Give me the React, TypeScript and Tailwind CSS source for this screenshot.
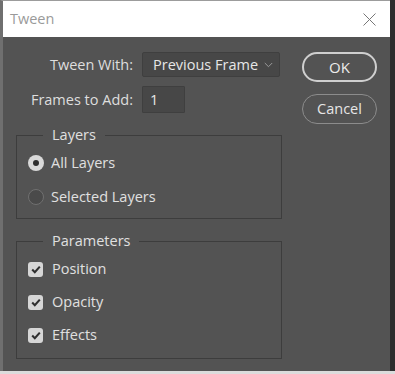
import { ReactNode } from 'react';

const font = { fontFamily: '"Open Sans", "Noto Sans", sans-serif' };

function Radio({ checked, label }: { checked?: boolean; label: string }) {
    return (
        <div className="flex h-[16px] items-center gap-[7px]">
            {checked ? (
                <span className="flex h-[16px] w-[16px] items-center justify-center rounded-full bg-[#d9d9d9]">
                    <span className="h-[6px] w-[6px] rounded-full bg-[#2e2e2e]" />
                </span>
            ) : (
                <span className="h-[16px] w-[16px] rounded-full border border-[#707070] bg-[#4a4a4a]" />
            )}
            <span className="text-[14.5px] text-[#e0e0e0]">{label}</span>
        </div>
    );
}

function Check({ label }: { label: string }) {
    return (
        <div className="flex h-[16px] items-center gap-[9px]">
            <span className="flex h-[15px] w-[15px] items-center justify-center rounded-[3px] bg-[#d6d6d6]">
                <svg width="10" height="9" viewBox="0 0 10 9">
                    <path d="M1.2 4.6 L3.8 7.2 L8.8 1.6" fill="none" stroke="#2f2f2f" strokeWidth="2.1" />
                </svg>
            </span>
            <span className="text-[14.5px] text-[#e0e0e0]">{label}</span>
        </div>
    );
}

function Group({ title, children, className }: { title: string; children: ReactNode; className?: string }) {
    return (
        <fieldset className={`ml-[13px] w-[266px] border border-[#3d3d3d] pl-[11px] ${className ?? ''}`}>
            <legend className="ml-[15px] px-[9px] text-[14.5px] leading-[20px] text-[#e0e0e0]">{title}</legend>
            {children}
        </fieldset>
    );
}

export default function App() {
    return (
        <div className="flex h-[374px] w-[395px] flex-col bg-[#dcdcdc]" style={font}>
            <div className="flex h-[371px]">
                <div className="flex w-[390px] flex-col border-l-[3px] border-t border-l-[#6f6f6f] border-t-[#9c9c9c]">
                    <div className="flex h-[36px] items-center justify-between bg-white pl-[7px] pr-[14px]">
                        <span className="text-[14.5px] text-[#9a9a9a]">Tween</span>
                        <svg width="13" height="13" viewBox="0 0 13 13">
                            <path d="M0.5 0.5 L12.5 12.5 M12.5 0.5 L0.5 12.5" stroke="#777" strokeWidth="1" />
                        </svg>
                    </div>
                    <div className="flex flex-1 bg-[#535353] pt-[15px]">
                        <div className="flex flex-col">
                            <div className="flex h-[25px] items-center">
                                <span className="w-[130px] text-right text-[14.5px] text-[#dedede]">Tween With:</span>
                                <div className="ml-[9px] flex h-[25px] w-[138px] items-center justify-between rounded-[2px] border border-[#3f3f3f] bg-[#474747] pl-[10px] pr-[6px]">
                                    <span className="text-[14.5px] text-[#e6e6e6]">Previous Frame</span>
                                    <svg width="9" height="6" viewBox="0 0 9 6">
                                        <path d="M0.8 1 L4.5 4.7 L8.2 1" fill="none" stroke="#9a9a9a" strokeWidth="1" />
                                    </svg>
                                </div>
                            </div>
                            <div className="mt-[9px] flex h-[27px] items-center">
                                <span className="w-[130px] text-right text-[14.5px] text-[#dedede]">Frames to Add:</span>
                                <div className="ml-[9px] flex h-[27px] w-[43px] items-center rounded-[1px] border border-[#3f3f3f] bg-[#474747] pl-[7px]">
                                    <span className="text-[14.5px] text-[#e6e6e6]">1</span>
                                </div>
                            </div>
                            <Group title="Layers" className="mt-[12px] h-[94px] pt-[10px]">
                                <div className="flex flex-col gap-[18px]">
                                    <Radio checked label="All Layers" />
                                    <Radio label="Selected Layers" />
                                </div>
                            </Group>
                            <Group title="Parameters" className="mt-[12px] h-[128px] pt-[10px]">
                                <div className="flex flex-col gap-[17px]">
                                    <Check label="Position" />
                                    <Check label="Opacity" />
                                    <Check label="Effects" />
                                </div>
                            </Group>
                        </div>
                        <div className="ml-[20px] flex flex-col gap-[12px]">
                            <button className="h-[30px] w-[75px] rounded-full border-2 border-[#cfcfcf] text-[15px] text-[#ececec]">OK</button>
                            <button className="h-[30px] w-[75px] rounded-full border border-[#8c8c8c] text-[14.5px] text-[#e6e6e6]">Cancel</button>
                        </div>
                    </div>
                </div>
                <div className="flex-1 bg-[#2e2e2e]" />
            </div>
        </div>
    );
}
